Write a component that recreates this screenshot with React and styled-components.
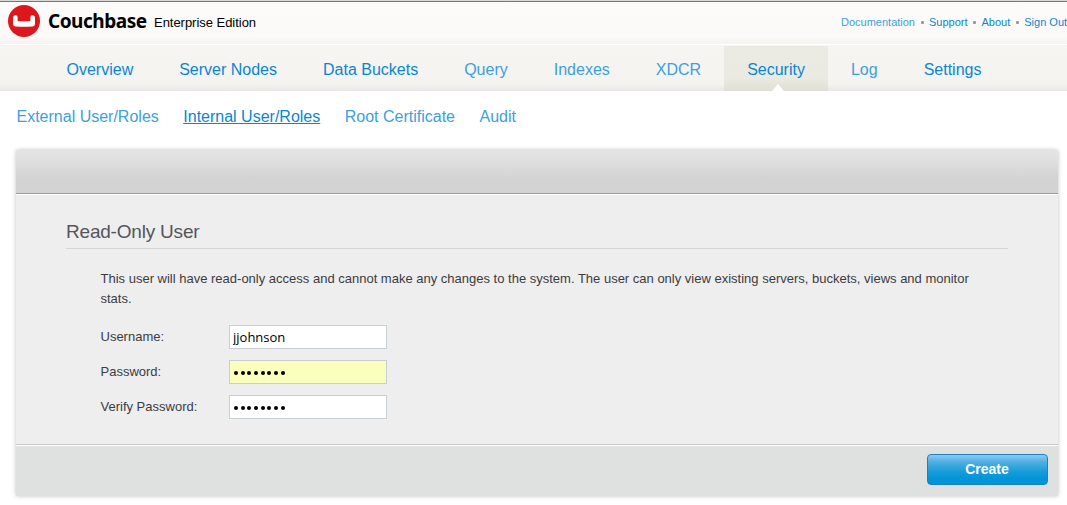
import React from "react";
import styled, { createGlobalStyle } from "styled-components";

const GlobalStyle = createGlobalStyle`
  * { box-sizing: border-box; }
  body {
    margin: 0;
    background: #fff;
    font-family: "Liberation Sans", Arial, sans-serif;
    color: #444;
  }
  a { text-decoration: none; white-space: nowrap; }
`;

const Page = styled.div`
  height: 505px;
  overflow: hidden;
`;

const Header = styled.header`
  display: flex;
  height: 44px;
  padding: 0 0 0 8px;
  overflow: hidden;
  border-top: 1px solid #d9dad8;
  background: linear-gradient(#777 0 1px, #fcfbf9 1px, #fbfaf8 36px, #f4f3f1 43px);
`;

const Logo = styled.svg`
  flex: none;
  width: 32px;
  height: 32px;
  margin-top: 4px;
`;

const Brand = styled.div`
  width: 98px;
  margin: 6px 0 0 8px;
  font: 700 20px/28px "Noto Sans", "Open Sans", sans-serif;
  letter-spacing: -0.5px;
  color: #000;
  white-space: nowrap;
  transform: scaleX(0.95);
  transform-origin: left;
`;

const Edition = styled.div`
  flex: none;
  width: 687px;
  margin: 14px 0 0 8px;
  font-size: 13px;
  line-height: 16px;
  letter-spacing: -0.03px;
  color: #000;
`;

const TopLinks = styled.nav`
  display: flex;
  flex: none;
  margin-top: 14px;
  font-size: 11px;
  line-height: 14px;
`;

const TopLink = styled.a`
  color: ${(p) => (p.$light ? "#3d9fdc" : "#0a86d0")};
  &:not(:first-child)::before {
    content: "";
    display: inline-block;
    width: 3px;
    height: 3px;
    margin: 0 5.5px 2px;
    vertical-align: middle;
    border-radius: 1px;
    background: #999;
  }
`;

const MainNav = styled.nav`
  display: flex;
  height: 47px;
  padding: 2px 0 0 43.5px;
  background: linear-gradient(#fff 0 1px, #f6f5f2 1px, #f4f3f0 40px, #e9e8e5 47px);
`;

const MainTab = styled.a`
  position: relative;
  padding: 0 23px;
  font-size: 16px;
  line-height: 47px;
  color: ${(p) => (p.$light ? "#3d9fdc" : "#0a86d0")};
  background: ${(p) => (p.$active ? "linear-gradient(#ecebe3, #ebeae2 32px, #e0dfd5 45px)" : "none")};
  &::after {
    content: "";
    display: ${(p) => (p.$active ? "block" : "none")};
    position: absolute;
    left: calc(50% - 4px);
    bottom: 0;
    border: solid transparent;
    border-width: 0 6px 7px;
    border-bottom-color: #fff;
  }
`;

const SubNav = styled.nav`
  display: flex;
  gap: 24.5px;
  height: 59px;
  padding: 16px 0 0 16.5px;
  font-size: 16px;
  line-height: 20px;
`;

const SubLink = styled.a`
  color: ${(p) => (p.$active ? "#0a86d0" : "#3d9fdc")};
  text-decoration: ${(p) => (p.$active ? "underline" : "none")};
  text-decoration-thickness: 1px;
  text-underline-offset: 1px;
`;

const Panel = styled.main`
  width: 1042px;
  margin-left: 16px;
  background: #eee;
  border-radius: 2px 2px 0 0;
  box-shadow: 0 0 4px rgba(0, 0, 0, 0.25);
`;

const PanelHeader = styled.div`
  height: 44px;
  border-bottom: 1px solid #9a9ba5;
  border-radius: 2px 2px 0 0;
  background: linear-gradient(#e4e4e4, #e0e0e0 10px, #d3d3d3 28px);
`;

const PanelBody = styled.section`
  height: 250px;
  padding: 25px 50px 0;
  border-top: 1px solid #fff;
`;

const Title = styled.h2`
  height: 29px;
  margin: 0;
  border-bottom: 1px solid #d5d7d7;
  font-size: 19px;
  font-weight: 400;
  line-height: 23px;
  letter-spacing: -0.2px;
  color: #55555a;
`;

const Form = styled.form`
  padding: 20px 0 0 34.5px;
  font-size: 13px;
  color: #3c3c3f;
`;

const Note = styled.p`
  width: 890px;
  margin: 0 0 16px;
  line-height: 20px;
`;

const Field = styled.label`
  display: flex;
  height: 24px;
  margin-bottom: 11px;
  line-height: 24px;
`;

const FieldName = styled.span`
  width: 128.5px;
`;

const Input = styled.input`
  width: 158px;
  height: 24px;
  padding: 0 3px 1px;
  border: 1px solid #c8cfd3;
  border-radius: 0;
  outline: none;
  background: #fff;
  font: 13px "Open Sans", sans-serif;
  color: #000;
`;

const Mask = styled.span`
  display: flex;
  align-items: center;
  gap: 2.7px;
  width: 158px;
  height: 24px;
  padding: 2px 0 0 4px;
  border: 1px solid #c8cfd3;
  background: ${(p) => (p.$filled ? "#faffbd" : "#fff")};
`;

const Dot = styled.i`
  width: 4px;
  height: 4px;
  border-radius: 50%;
  background: #000;
`;

const PanelFooter = styled.footer`
  display: flex;
  justify-content: flex-end;
  height: 52px;
  padding: 9px 10px 0;
  border-top: 1px solid #c9c9cb;
  background: #dfe1e0;
  box-shadow: inset 0 1px #fff;
`;

const Button = styled.button`
  width: 121px;
  height: 31px;
  padding: 0 1px 1px 0;
  border: 1px solid #1c80c6;
  border-radius: 4px;
  background: linear-gradient(#8fcaee, #4fafe1 7px, #169bd9 17px, #0095d8 24px);
  font: 700 14px "Liberation Sans", Arial, sans-serif;
  color: #fff;
`;

const topLinks = [
  { label: "Documentation", light: true },
  { label: "Support" },
  { label: "About" },
  { label: "Sign Out" },
];

const tabs = [
  { label: "Overview" },
  { label: "Server Nodes" },
  { label: "Data Buckets" },
  { label: "Query", light: true },
  { label: "Indexes", light: true },
  { label: "XDCR", light: true },
  { label: "Security", active: true },
  { label: "Log", light: true },
  { label: "Settings" },
];

const sections = [
  { label: "External User/Roles" },
  { label: "Internal User/Roles", active: true },
  { label: "Root Certificate" },
  { label: "Audit" },
];

function MaskedValue({ length, filled }) {
  return (
    <Mask $filled={filled}>
      {Array.from({ length }, (_, i) => <Dot key={i} />)}
    </Mask>
  );
}

export default function App() {
  return (
    <Page>
      <GlobalStyle />
      <Header>
        <Logo viewBox="0 0 32 32">
          <circle cx="16" cy="16" r="16" fill="#dc181d" />
          <path d="M7.600 10.200Q5 10.300 5 12.800V19q0 2.200 2.300 2.400 8.700.8 17.400 0Q27 21.200 27 19v-6.200q0-2.500-2.600-2.600-2 0-2 1.800v3.900q-6.400.5-12.800 0V12q0-1.800-2-1.800Z" fill="#fff" />
        </Logo>
        <Brand>Couchbase</Brand>
        <Edition>Enterprise Edition</Edition>
        <TopLinks>
          {topLinks.map((l) => (
            <TopLink key={l.label} href="#" $light={l.light}>{l.label}</TopLink>
          ))}
        </TopLinks>
      </Header>
      <MainNav>
        {tabs.map((t) => (
          <MainTab key={t.label} href="#" $light={t.light} $active={t.active}>{t.label}</MainTab>
        ))}
      </MainNav>
      <SubNav>
        {sections.map((s) => (
          <SubLink key={s.label} href="#" $active={s.active}>{s.label}</SubLink>
        ))}
      </SubNav>
      <Panel>
        <PanelHeader />
        <PanelBody>
          <Title>Read-Only User</Title>
          <Form>
            <Note>
              This user will have read-only access and cannot make any changes to the system. The user can
              only view existing servers, buckets, views and monitor stats.
            </Note>
            <Field>
              <FieldName>Username:</FieldName>
              <Input defaultValue="jjohnson" />
            </Field>
            <Field>
              <FieldName>Password:</FieldName>
              <MaskedValue length={8} filled />
            </Field>
            <Field>
              <FieldName>Verify Password:</FieldName>
              <MaskedValue length={8} />
            </Field>
          </Form>
        </PanelBody>
        <PanelFooter>
          <Button>Create</Button>
        </PanelFooter>
      </Panel>
    </Page>
  );
}
